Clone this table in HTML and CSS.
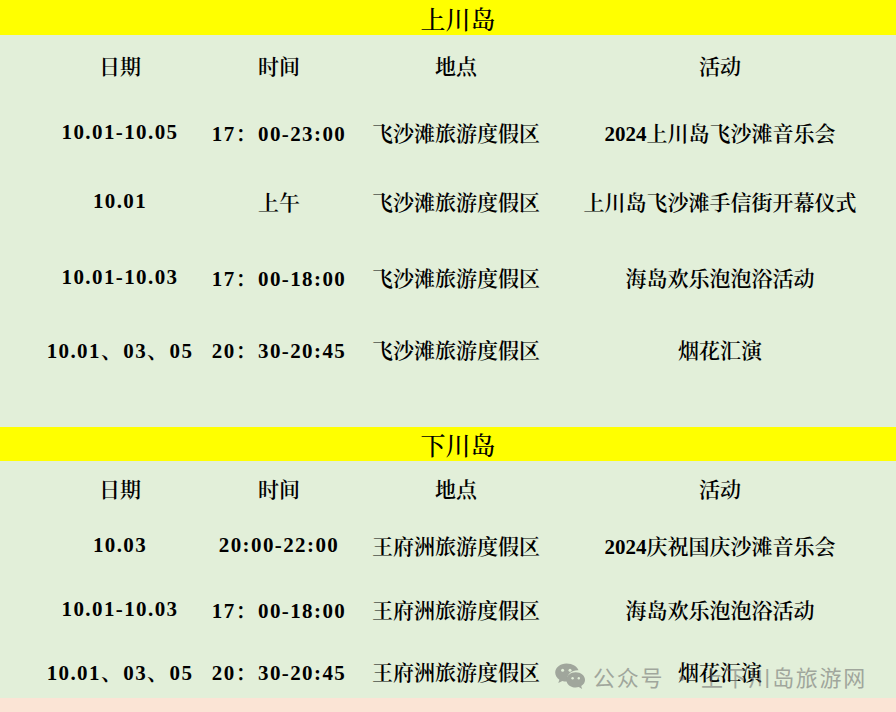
FILE: index.html
```html
<!DOCTYPE html>
<html lang="zh-CN">
<head>
<meta charset="utf-8">
<title>上川岛 下川岛 国庆活动</title>
<link rel="stylesheet" href="styles.css">
</head>
<body>
<div class="page">
  <section class="island">
    <div class="band">上川岛</div>
    <div class="table table-one">
      <div class="cell head">日期</div>
      <div class="cell head">时间</div>
      <div class="cell head">地点</div>
      <div class="cell head">活动</div>

      <div class="cell num">10.01-10.05</div>
      <div class="cell num">17：00-23:00</div>
      <div class="cell">飞沙滩旅游度假区</div>
      <div class="cell">2024上川岛飞沙滩音乐会</div>

      <div class="cell num">10.01</div>
      <div class="cell">上午</div>
      <div class="cell">飞沙滩旅游度假区</div>
      <div class="cell">上川岛飞沙滩手信街开幕仪式</div>

      <div class="cell num">10.01-10.03</div>
      <div class="cell num">17：00-18:00</div>
      <div class="cell">飞沙滩旅游度假区</div>
      <div class="cell">海岛欢乐泡泡浴活动</div>

      <div class="cell num">10.01、03、05</div>
      <div class="cell num">20：30-20:45</div>
      <div class="cell">飞沙滩旅游度假区</div>
      <div class="cell">烟花汇演</div>
    </div>
  </section>

  <section class="island">
    <div class="band band-two">下川岛</div>
    <div class="table table-two">
      <div class="cell head">日期</div>
      <div class="cell head">时间</div>
      <div class="cell head">地点</div>
      <div class="cell head">活动</div>

      <div class="cell num">10.03</div>
      <div class="cell num">20:00-22:00</div>
      <div class="cell">王府洲旅游度假区</div>
      <div class="cell">2024庆祝国庆沙滩音乐会</div>

      <div class="cell num">10.01-10.03</div>
      <div class="cell num">17：00-18:00</div>
      <div class="cell">王府洲旅游度假区</div>
      <div class="cell">海岛欢乐泡泡浴活动</div>

      <div class="cell num">10.01、03、05</div>
      <div class="cell num">20：30-20:45</div>
      <div class="cell">王府洲旅游度假区</div>
      <div class="cell">烟花汇演</div>
    </div>
  </section>

  <div class="footer-strip"></div>

  <div class="watermark">
    <svg class="wm-icon" viewBox="0 0 32 28" width="32" height="28" aria-hidden="true">
      <path d="M12.5 1.5C6.2 1.5 1.2 5.6 1.2 10.6c0 2.9 1.6 5.4 4.2 7.1l-1.1 3.4 4-2.1c1.3.4 2.7.6 4.2.6.3 0 .7 0 1 0-.2-.8-.4-1.6-.4-2.4 0-4.9 4.7-8.9 10.5-8.9.3 0 .6 0 .9 0C23.4 4.8 18.5 1.5 12.5 1.5z" />
      <path d="M31 17.9c0-4.2-4.2-7.6-9.3-7.6s-9.3 3.4-9.3 7.6 4.2 7.6 9.3 7.6c1.1 0 2.1-.1 3.1-.4l3.3 1.8-.9-3c2.3-1.4 3.8-3.6 3.8-6z" />
      <circle class="eye" cx="8.6" cy="8.2" r="1.5"/>
      <circle class="eye" cx="16" cy="8.2" r="1.5"/>
      <circle class="eye" cx="18.6" cy="16.3" r="1.2"/>
      <circle class="eye" cx="24.8" cy="16.3" r="1.2"/>
    </svg>
    <span class="wm-text">公众号 · 上下川岛旅游网</span>
  </div>
</div>
</body>
</html>
```

FILE: styles.css
```css
html, body {
  margin: 0;
  padding: 0;
}

body {
  background: #e2efd9;
  font-family: "Liberation Serif", "Noto Serif CJK SC", "Noto Sans CJK SC", serif;
  color: #000;
}

.page {
  position: relative;
  width: 896px;
  height: 712px;
  overflow: hidden;
  display: flex;
  flex-direction: column;
}

.band {
  background: #ffff00;
  height: 35px;
  display: flex;
  align-items: center;
  justify-content: center;
  font-size: 25px;
  font-weight: 500;
  padding-left: 20px;
  box-sizing: border-box;
}

.band-two {
  height: 34px;
}

.table {
  display: grid;
  grid-template-columns: 160px 158px 196px 332px;
  padding-left: 40px;
}

.table-one {
  grid-template-rows: 60px 74px 64px 88px 56px;
  padding-bottom: 50px;
}

.table-two {
  grid-template-rows: 54px 60px 68px 55px;
}

.cell {
  display: flex;
  align-items: center;
  justify-content: center;
  font-size: 21px;
  white-space: nowrap;
  font-weight: 600;
}

.num {
  letter-spacing: 1.4px;
}

.footer-strip {
  flex: 1;
  background: #fbe4d5;
}

.watermark {
  position: absolute;
  left: 554px;
  top: 661px;
  display: flex;
  align-items: center;
  gap: 7px;
  opacity: 0.55;
  color: #6b6b6b;
}

.wm-icon {
  display: block;
  fill: #6b6b6b;
}

.wm-icon .eye {
  fill: #e2efd9;
}

.wm-text {
  font-family: "Noto Sans CJK SC", sans-serif;
  font-size: 22px;
  letter-spacing: 1.7px;
  line-height: 30px;
}
```
